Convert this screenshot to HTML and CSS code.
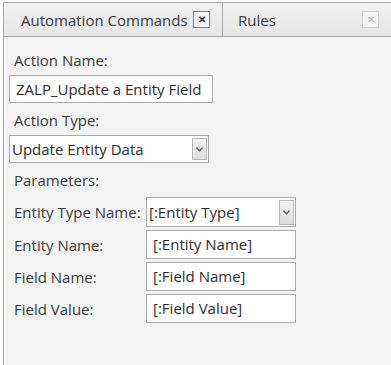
FILE: index.html
```html
<!DOCTYPE html>
<html lang="en">
<head>
  <meta charset="UTF-8" />
  <title>Automation Commands</title>
  <link rel="stylesheet" href="styles.css">
</head>
<body>
  <div class="tabs">
    <div class="tab active">
      <span class="tab-title">Automation Commands</span>
      <span class="close">&#x2715;</span>
    </div>
    <div class="tab">
      <span class="tab-title">Rules</span>
      <span class="close disabled">&#x2715;</span>
    </div>
  </div>

  <div class="content">
    <div class="label">Action Name:</div>
    <div class="box action-name">ZALP_Update a Entity Field</div>

    <div class="label">Action Type:</div>
    <div class="box select action-type">
      <span>Update Entity Data</span>
      <span class="arrow"><svg width="7" height="5" viewBox="0 0 7 5"><path d="M0.5 0.8 L3.5 3.8 L6.5 0.8" fill="none" stroke="#555" stroke-width="1.4"/></svg></span>
    </div>

    <div class="label">Parameters:</div>
    <div class="params">
      <div class="param-label">Entity Type Name:</div>
      <div class="box select param param-select">
        <span>[:Entity Type]</span>
        <span class="arrow"><svg width="7" height="5" viewBox="0 0 7 5"><path d="M0.5 0.8 L3.5 3.8 L6.5 0.8" fill="none" stroke="#555" stroke-width="1.4"/></svg></span>
      </div>
      <div class="param-label">Entity Name:</div>
      <div class="box param">[:Entity Name]</div>
      <div class="param-label">Field Name:</div>
      <div class="box param">[:Field Name]</div>
      <div class="param-label">Field Value:</div>
      <div class="box param">[:Field Value]</div>
    </div>
  </div>
</body>
</html>
```

FILE: styles.css
```css
html, body {
  height: 100%;
}

body {
  margin: 0;
  padding: 2px 0 0 3px;
  box-sizing: border-box;
  background-color: #ffffff;
  font-family: 'Open Sans', 'Noto Sans', sans-serif;
  font-size: 15px;
  color: #3b3b3b;
  display: flex;
  flex-direction: column;
}

.tabs {
  display: flex;
  height: 33px;
  border-top: 1px solid #a9a9a9;
  border-bottom: 1px solid #a9a9a9;
  background: linear-gradient(#f1f1f1, #e6e6e6);
}

.tab {
  display: flex;
  align-items: center;
  border-left: 1px solid #a9a9a9;
  box-sizing: border-box;
}

.tab.active {
  width: 219px;
  padding-left: 17px;
}

.tab:last-child {
  flex: 1;
  padding-left: 15px;
}

.tab-title {
  flex: 1;
}

.close {
  width: 15px;
  height: 15px;
  border: 1px solid #7f7f7f;
  background-color: #f4f4f4;
  font-size: 10px;
  font-weight: bold;
  line-height: 15px;
  text-align: center;
  color: #222;
  margin-right: 12px;
}

.close.disabled {
  border-color: #d4d4d4;
  color: #b0b0b0;
  font-weight: normal;
}

.content {
  flex: 1;
  background-color: #f4f4f4;
  border-left: 1px solid #a9a9a9;
  padding: 13px 0 0 5px;
}

.label {
  padding-left: 5px;
  line-height: 20px;
  margin-bottom: 5px;
}

.box {
  background-color: #ffffff;
  border: 1px solid #aaaaaa;
  height: 26px;
  line-height: 26px;
  padding-left: 6px;
  margin-bottom: 7px;
  white-space: nowrap;
  color: #2e2e2e;
}

.action-name {
  width: 196px;
}

.select {
  display: flex;
  align-items: center;
  justify-content: space-between;
  padding-left: 2px;
}

.action-type {
  width: 196px;
}

.arrow {
  width: 13px;
  height: 20px;
  border: 1px solid #b8b8b8;
  background: linear-gradient(#f3f3f3, #dcdcdc);
  display: flex;
  align-items: center;
  justify-content: center;
  margin-right: 1px;
}

.params {
  display: grid;
  grid-template-columns: 137px 150px;
  row-gap: 3px;
  align-items: center;
  margin-top: 7px;
}

.param-label {
  padding-left: 5px;
}

.param {
  width: 142px;
  height: 27px;
  line-height: 27px;
  margin-bottom: 0;
}

.param-select {
  width: 146px;
  height: 28px;
  padding-left: 2px;
}

.param-select .arrow {
  height: 23px;
}
```
